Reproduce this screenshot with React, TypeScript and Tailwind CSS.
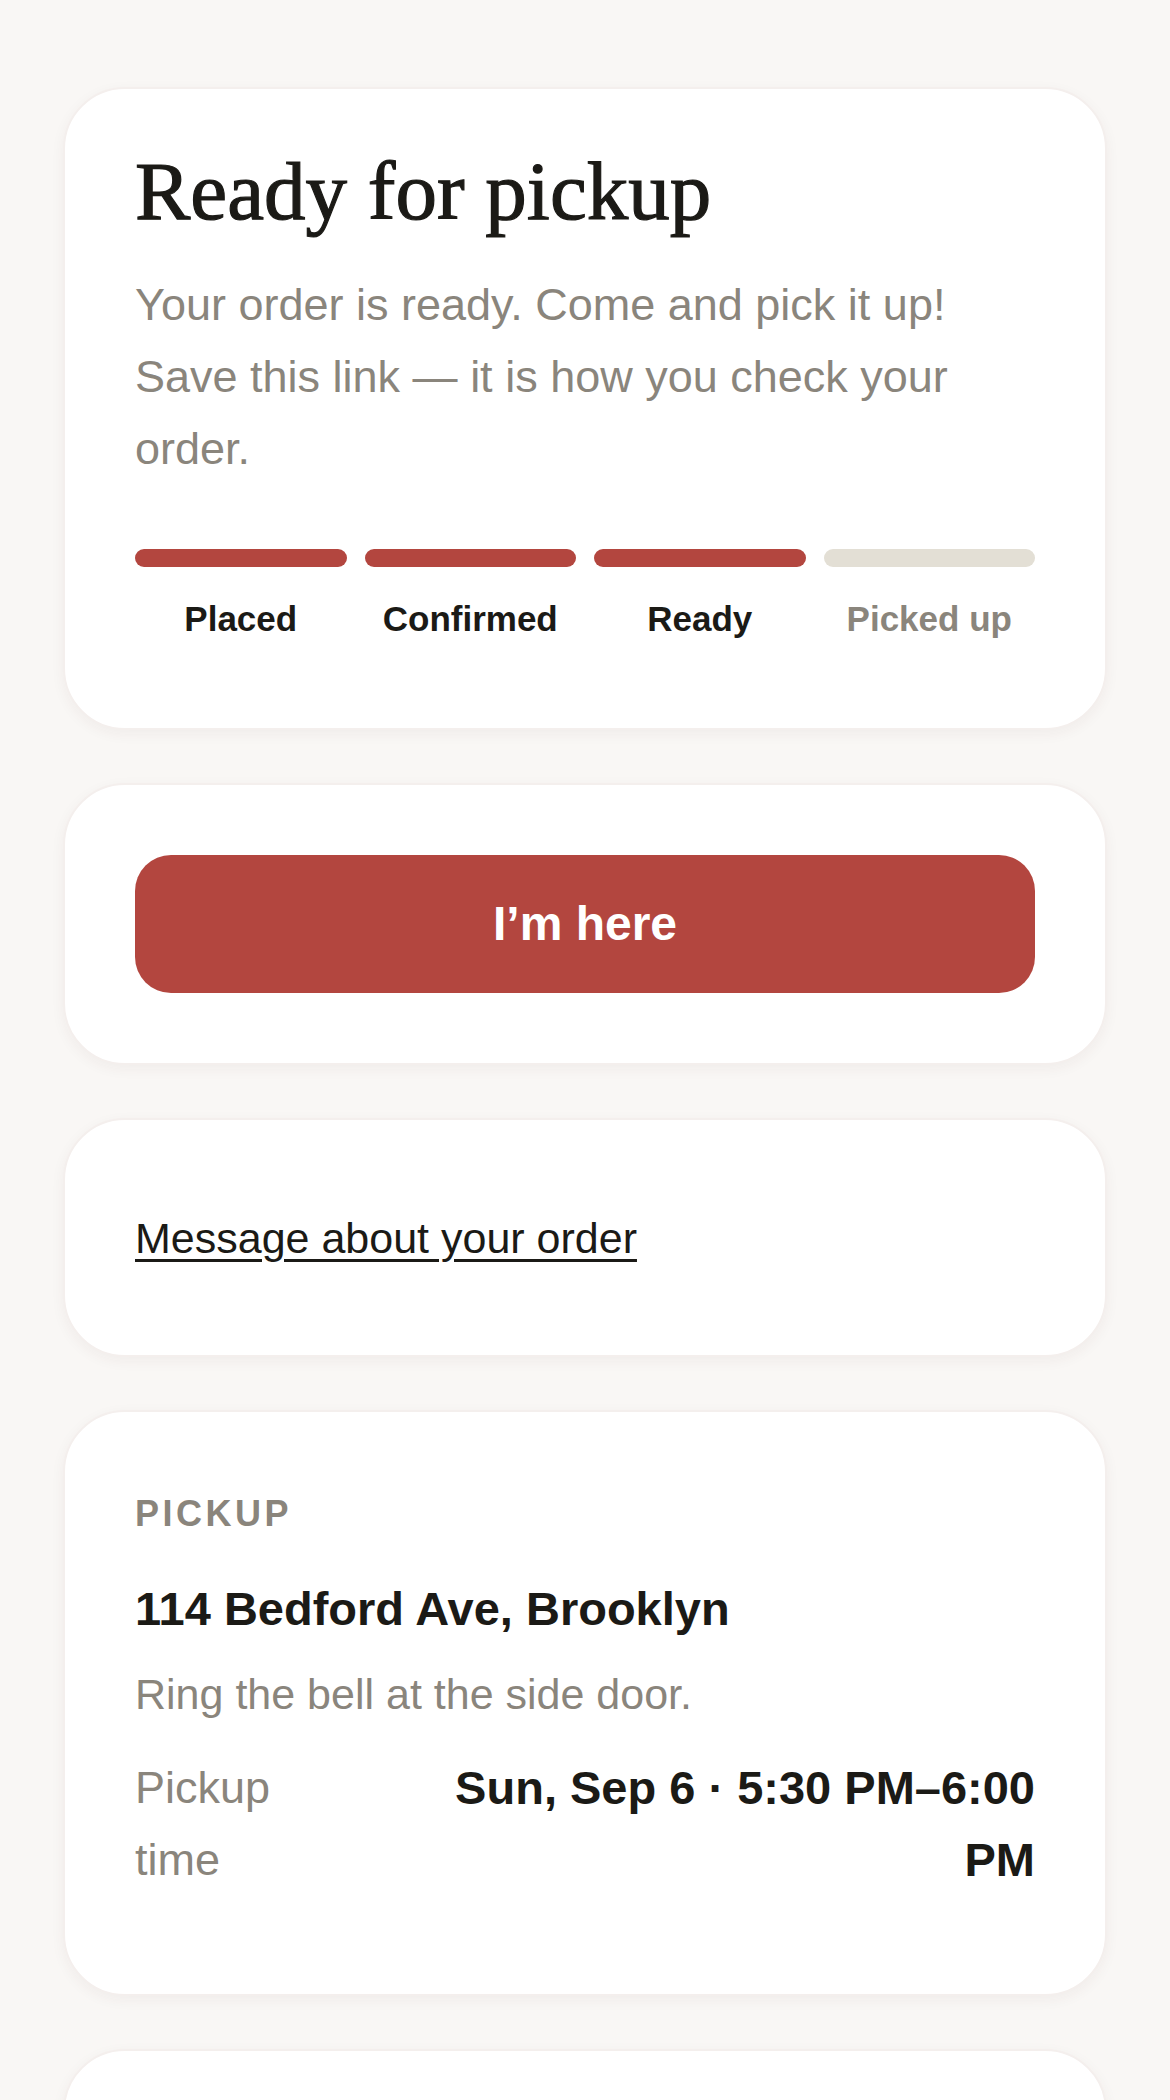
const steps = [
  { label: "Placed", done: true },
  { label: "Confirmed", done: true },
  { label: "Ready", done: true },
  { label: "Picked up", done: false },
];

const sans = "font-['Liberation_Sans',Arial,sans-serif]";

function Card({ className = "", children }: { className?: string; children?: React.ReactNode }) {
  return (
    <section
      className={`rounded-[62px] border-[2px] border-[#f4efed] bg-white px-[70px] shadow-[0_4px_14px_rgba(70,45,30,0.05)] ${className}`}
    >
      {children}
    </section>
  );
}

export default function App() {
  return (
    <div className={`h-[2100px] overflow-hidden bg-[#f9f7f5] px-[63px] pt-[87px] ${sans}`}>
      <div className="flex flex-col gap-[53px]">
        <Card className="pb-[85px] pt-[57px]">
          <h1 className="font-['Liberation_Serif','Times_New_Roman',serif] text-[83px] leading-[90px] text-[#1b1a16] [-webkit-text-stroke:1.2px_#1b1a16]">
            Ready for pickup
          </h1>
          <p className="mt-[33px] text-[45px] leading-[72px] text-[#8a857c]">
            Your order is ready. Come and pick it up! Save this link — it is how you check your order.
          </p>
          <div className="mt-[64px] grid grid-cols-4 gap-[18px]">
            {steps.map((step) => (
              <div key={step.label} className="flex flex-col items-center">
                <div className={`h-[18px] w-full rounded-full ${step.done ? "bg-[#b3463f]" : "bg-[#e3dfd5]"}`} />
                <span
                  className={`mt-[28px] text-[35px] font-bold leading-[48px] ${
                    step.done ? "text-[#1b1a16]" : "text-[#8a857c]"
                  }`}
                >
                  {step.label}
                </span>
              </div>
            ))}
          </div>
        </Card>

        <Card className="py-[70px]">
          <button
            type="button"
            className="flex h-[138px] w-full items-center justify-center rounded-[36px] bg-[#b3463f] text-[48px] font-bold text-white"
          >
            I’m here
          </button>
        </Card>

        <Card className="py-[70px]">
          <div className="flex h-[95px] items-center">
            <a
              href="#"
              className="text-[43px] leading-[64px] text-[#1b1a16] underline decoration-[3px] underline-offset-[6px]"
            >
              Message about your order
            </a>
          </div>
        </Card>

        <Card className="pb-[98px] pt-[70px]">
          <p className="text-[36px] font-bold uppercase leading-[64px] tracking-[3.5px] text-[#8a857c]">Pickup</p>
          <p className="mt-[31px] text-[47px] font-bold leading-[64px] text-[#1b1a16]">114 Bedford Ave, Brooklyn</p>
          <p className="mt-[21px] text-[43px] leading-[64px] text-[#8a857c]">Ring the bell at the side door.</p>
          <div className="mt-[26px] flex items-start justify-between gap-[80px]">
            <span className="w-[200px] shrink-0 text-[45px] leading-[72px] text-[#8a857c]">Pickup time</span>
            <span className="text-right text-[47px] font-bold leading-[72px] text-[#1b1a16]">
              Sun, Sep 6 · 5:30 PM–6:00 PM
            </span>
          </div>
        </Card>

        <Card className="h-[300px]" />
      </div>
    </div>
  );
}
